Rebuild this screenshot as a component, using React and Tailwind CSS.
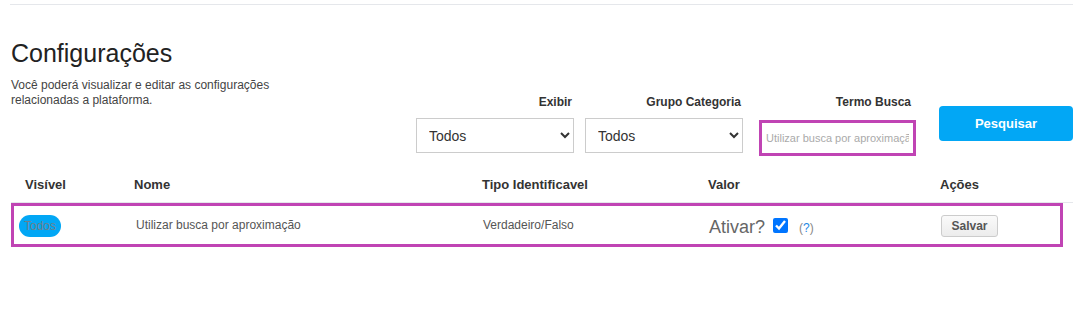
import React from "react";

const Filtro = ({ label, children, labelPad }) => (
    <div className="flex flex-col">
        <span className={`text-[12px] leading-[15px] font-bold text-[#333] text-right ${labelPad}`}>{label}</span>
        {children}
    </div>
);

const App = () => {
    return (
        <div className="w-[1086px] h-[336px] bg-white font-['Liberation_Sans',Arial,sans-serif] overflow-hidden">
            <div className="pt-1">
                <div className="ml-[10px] w-[1063px] border-t border-[#e5e7eb]" />
            </div>

            <div className="pl-[11px] w-[1073px]">
                <h1 className="mt-[34px] text-[25px] leading-[29px] text-[#222]">Configurações</h1>

                <div className="flex items-start">
                    <p className="mt-[10px] w-[290px] text-[12px] leading-[15px] text-[#444]">
                        Você poderá visualizar e editar as configurações relacionadas a plataforma.
                    </p>

                    <div className="flex-1 flex justify-end items-start mt-[27px]">
                        <Filtro label="Exibir" labelPad="pr-[2px]">
                            <select className="mt-2 w-[158px] h-[35px] border border-[#ccc] bg-white px-2 text-[14px] text-[#333]">
                                <option>Todos</option>
                            </select>
                        </Filtro>
                        <div className="ml-[11px]">
                            <Filtro label="Grupo Categoria" labelPad="pr-[2px]">
                                <select className="mt-2 w-[158px] h-[35px] border border-[#ccc] bg-white px-2 text-[14px] text-[#333]">
                                    <option>Todos</option>
                                </select>
                            </Filtro>
                        </div>
                        <div className="ml-[16px]">
                            <Filtro label="Termo Busca" labelPad="pr-[5px]">
                                <input
                                    type="text"
                                    placeholder="Utilizar busca por aproximação"
                                    className="mt-[10px] w-[157px] h-[36px] border-[3px] border-[#c044b4] bg-white px-[4px] text-[11px] text-[#333] placeholder:text-[#aaa] outline-none"
                                />
                            </Filtro>
                        </div>
                        <button className="ml-[23px] mt-[11px] w-[134px] h-[35px] rounded-[4px] bg-[#02a7f5] text-white text-[13px] font-bold">
                            Pesquisar
                        </button>
                    </div>
                </div>

                <div className="mt-[14px] w-[1062px]">
                    <div className="grid grid-cols-[111px_348px_226px_232px_1fr] h-[32px] pt-[7px] text-[13px] leading-[15px] font-bold text-[#333]">
                        <span className="pl-[14px]">Visível</span>
                        <span className="pl-[12px]">Nome</span>
                        <span className="pl-[12px]">Tipo Identificavel</span>
                        <span className="pl-[12px]">Valor</span>
                        <span className="pl-[12px]">Ações</span>
                    </div>

                    <div className="border-t border-[#e5e7eb]">
                        <div className="w-[1052px] h-[44px] border-[3px] border-[#c044b4] grid grid-cols-[108px_348px_226px_232px_1fr] items-center">
                            <div className="pl-[5px]">
                                <span className="inline-flex items-center h-[22px] px-[5px] rounded-full bg-[#02a7f5] text-[12px] text-[#6f7f8c]">
                                    Todos
                                </span>
                            </div>
                            <div className="pl-[14px] text-[12px] text-[#555]">Utilizar busca por aproximação</div>
                            <div className="pl-[13px] text-[12px] text-[#555]">Verdadeiro/Falso</div>
                            <div className="pl-[13px] flex items-center">
                                <span className="text-[18px] leading-[20px] text-[#666] mt-[3px]">Ativar?</span>
                                <input type="checkbox" defaultChecked className="m-0 ml-[8px] w-[15px] h-[15px] accent-[#0075ff]" />
                                <span className="ml-[11px] mt-[6px] text-[12px] text-[#888]">
                                    (<span className="text-[#1e88e5]">?</span>)
                                </span>
                            </div>
                            <div className="pl-[13px]">
                                <button className="h-[22px] w-[57px] rounded-[3px] border border-[#ccc] bg-gradient-to-b from-[#fafafa] to-[#ececec] text-[12px] font-bold text-[#555]">
                                    Salvar
                                </button>
                            </div>
                        </div>
                    </div>
                </div>
            </div>
        </div>
    );
};

export default App;
